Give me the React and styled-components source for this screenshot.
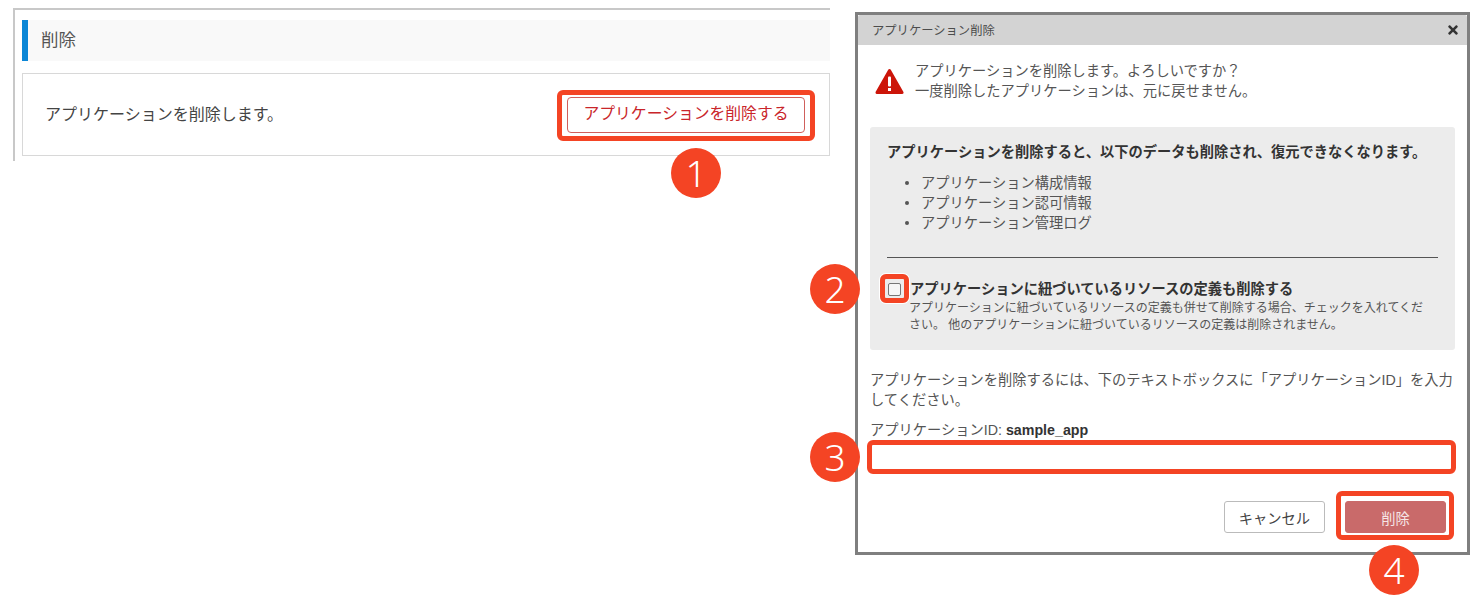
import React from 'react';
import styled, { createGlobalStyle } from 'styled-components';
import { FaTimes } from 'react-icons/fa';

const GlobalStyle = createGlobalStyle`
    * { box-sizing: border-box; }
    body {
        margin: 0;
        background: #fff;
        color: #555;
        font-family: "Liberation Sans", "Noto Sans CJK JP", sans-serif;
    }
`

const Page = styled.div`
    display: flex;
    align-items: flex-start;
    width: 1484px;
    height: 602px;
    overflow: hidden;
    padding-left: 13px;
`

const SettingsPanel = styled.section`
    width: 817px;
    height: 153px;
    margin-top: 8px;
    padding: 10px 0 0 7px;
    border-top: 2px solid #c8c8c8;
    border-left: 2px solid #c8c8c8;
`

const SectionTitle = styled.h2`
    height: 41px;
    margin: 0 0 12px;
    padding-left: 13px;
    border-left: 6px solid #0b86d6;
    background: #f9f9f9;
    color: #555;
    font-size: 17.5px;
    font-weight: 400;
    line-height: 40px;
`

const SectionBody = styled.div`
    display: flex;
    align-items: center;
    justify-content: space-between;
    height: 83px;
    padding: 0 24px 0 22px;
    border: 1px solid #d8d8d8;
    color: #444;
    font-size: 16px;
`

const SectionText = styled.span`
    margin-top: -4px;
`

const Annotated = styled.div`
    position: relative;
    display: ${p => (p.$block ? 'block' : 'inline-block')};
    line-height: 0;
`

const Frame = styled.span`
    position: absolute;
    inset: ${p => p.$inset};
    border: 5px solid #f44424;
    border-radius: 6px;
    box-shadow: 0 0 0 1px #fff;
    pointer-events: none;
`

const Badge = styled.span`
    position: absolute;
    left: ${p => p.$left}px;
    top: ${p => p.$top}px;
    z-index: 2;
    width: 50px;
    height: 50px;
    border-radius: 50%;
    background: #f44424;
    color: #fff;
    font-family: "Noto Sans", sans-serif;
    font-size: 37px;
    font-weight: 300;
    line-height: 50px;
    text-align: center;
`

const OutlineDanger = styled.button`
    display: block;
    width: 238px;
    height: 36px;
    padding: 0 0 2px;
    border: 1px solid #d0605c;
    border-radius: 4px;
    background: #fff;
    color: #c9252a;
    font-family: inherit;
    font-size: 15.8px;
    line-height: 30px;
`

const Modal = styled.div`
    width: 615px;
    height: 543px;
    margin: 12px 0 0 25px;
    border: 3px solid #7f7f7f;
    background: #fff;
`

const ModalHeader = styled.header`
    display: flex;
    align-items: center;
    justify-content: space-between;
    height: 30px;
    padding: 0 7px 0 14px;
    border-radius: 2px 2px 0 0;
    background: #d3d3d3;
    color: #4c4c4c;
    font-size: 12.3px;
`

const CloseIcon = styled(FaTimes)`
    color: #333;
    font-size: 14px;
`

const ModalBody = styled.div`
    padding: 17px 12px 0;
    font-size: 14.25px;
    line-height: 19.5px;
`

const Warning = styled.div`
    display: flex;
    align-items: flex-start;
    gap: 11px;
    padding-left: 5px;
`

const WarningIcon = styled.svg`
    flex: none;
    width: 29px;
    height: 27px;
    margin-top: 6px;
`

const Notice = styled.div`
    margin-top: 26px;
    padding: 15px 17px 16px;
    border-radius: 3px;
    background: #ececec;
    line-height: 20px;
`

const NoticeTitle = styled.div`
    color: #333;
    font-weight: 700;
`

const DataList = styled.ul`
    margin: 11px 0 0;
    padding-left: 18px;
    list-style: none;

    li {
        display: flex;
        align-items: center;
    }

    li::before {
        content: "";
        flex: none;
        width: 4px;
        height: 4px;
        margin-right: 12px;
        border-radius: 50%;
        background: #555;
    }
`

const Divider = styled.hr`
    height: 1px;
    margin: 24px 0 21px;
    border: none;
    background: #555;
`

const CheckRow = styled.div`
    display: grid;
    grid-template-columns: 13px 1fr;
    column-gap: 9px;
    padding-left: 1px;
`

const CheckBox = styled.input`
    appearance: none;
    display: block;
    width: 13px;
    height: 13px;
    margin: 0;
    border: 1px solid #767676;
    border-radius: 2px;
    background: #f6f6f6;
`

const CheckAnchor = styled(Annotated)`
    margin-top: 4px;
    height: 13px;
`

const CheckLabel = styled.label`
    color: #333;
    font-weight: 700;
`

const CheckHelp = styled.div`
    grid-column: 2;
    margin: 1px 0 0 -1px;
    padding-right: 10px;
    font-size: 12px;
    line-height: 17px;
`

const Instruction = styled.p`
    margin: 21px 0 0;
`

const IdLabel = styled.div`
    margin-top: 10px;
    line-height: 20px;

    strong {
        color: #333;
    }
`

const IdInput = styled.input`
    display: block;
    width: 100%;
    height: 28px;
    border: none;
    background: #fff;
`

const IdAnchor = styled(Annotated)`
    margin-top: 3px;
`

const Actions = styled.div`
    display: flex;
    justify-content: flex-end;
    gap: 20px;
    margin: 30px 9px 0 0;
`

const Button = styled.button`
    display: block;
    width: 101px;
    height: 32px;
    padding: 0;
    border: 1px solid ${p => (p.$danger ? '#c96a6a' : '#bbb')};
    border-radius: 3px;
    background: ${p => (p.$danger ? '#c96a6a' : '#fff')};
    color: ${p => (p.$danger ? '#f6e6e6' : '#444')};
    font-family: inherit;
    font-size: 14.25px;
`

export default function App() {
    return (
        <Page>
            <GlobalStyle />
            <SettingsPanel>
                <SectionTitle>削除</SectionTitle>
                <SectionBody>
                    <SectionText>アプリケーションを削除します。</SectionText>
                    <Annotated>
                        <OutlineDanger>アプリケーションを削除する</OutlineDanger>
                        <Frame $inset="-7px -10px -8px -10px" />
                        <Badge $left={104} $top={51}>1</Badge>
                    </Annotated>
                </SectionBody>
            </SettingsPanel>

            <Modal>
                <ModalHeader>
                    <span>アプリケーション削除</span>
                    <CloseIcon />
                </ModalHeader>
                <ModalBody>
                    <Warning>
                        <WarningIcon viewBox="0 0 29 27">
                            <path d="M14.5 2.5 L27 24.5 H2 Z" fill="#cc1509" stroke="#cc1509" strokeWidth="3" strokeLinejoin="round" />
                            <rect x="13" y="8.5" width="3" height="10" rx="1" fill="#fff" />
                            <rect x="13" y="20" width="3" height="3" fill="#fff" />
                        </WarningIcon>
                        <div>
                            アプリケーションを削除します。よろしいですか？<br />
                            一度削除したアプリケーションは、元に戻せません。
                        </div>
                    </Warning>

                    <Notice>
                        <NoticeTitle>アプリケーションを削除すると、以下のデータも削除され、復元できなくなります。</NoticeTitle>
                        <DataList>
                            <li>アプリケーション構成情報</li>
                            <li>アプリケーション認可情報</li>
                            <li>アプリケーション管理ログ</li>
                        </DataList>
                        <Divider />
                        <CheckRow>
                            <CheckAnchor>
                                <CheckBox type="checkbox" id="deleteResources" />
                                <Frame $inset="-9px -8px -7px -8px" />
                                <Badge $left={-78} $top={-19}>2</Badge>
                            </CheckAnchor>
                            <CheckLabel htmlFor="deleteResources">アプリケーションに紐づいているリソースの定義も削除する</CheckLabel>
                            <CheckHelp>
                                アプリケーションに紐づいているリソースの定義も併せて削除する場合、チェックを入れてください。 他のアプリケーションに紐づいているリソースの定義は削除されません。
                            </CheckHelp>
                        </CheckRow>
                    </Notice>

                    <Instruction>
                        アプリケーションを削除するには、下のテキストボックスに「アプリケーションID」を入力してください。
                    </Instruction>
                    <IdLabel>アプリケーションID: <strong>sample_app</strong></IdLabel>
                    <IdAnchor $block>
                        <IdInput type="text" />
                        <Frame $inset="-3px -1px -3px -3px" />
                        <Badge $left={-60} $top={-11}>3</Badge>
                    </IdAnchor>

                    <Actions>
                        <Button>キャンセル</Button>
                        <Annotated>
                            <Button $danger>削除</Button>
                            <Frame $inset="-10px -8px -7px -9px" />
                            <Badge $left={24} $top={44}>4</Badge>
                        </Annotated>
                    </Actions>
                </ModalBody>
            </Modal>
        </Page>
    )
}
